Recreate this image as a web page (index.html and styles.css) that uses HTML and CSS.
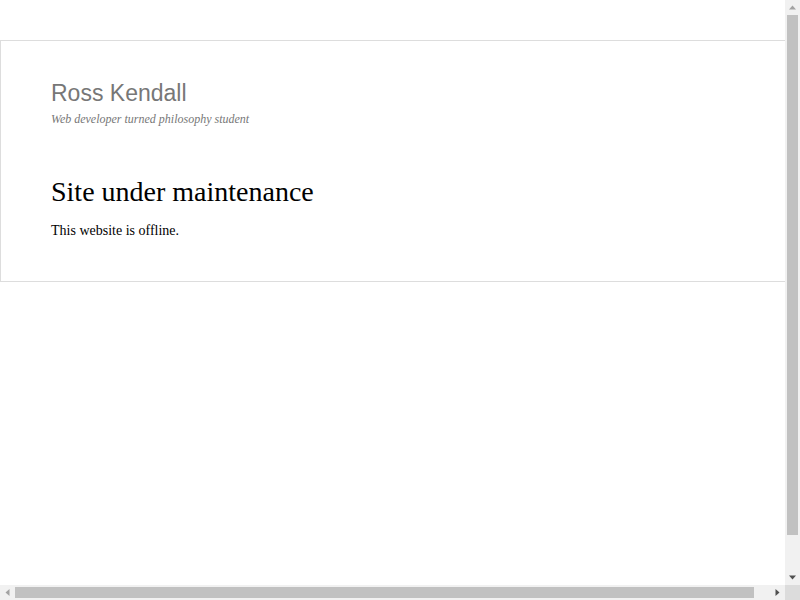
FILE: index.html
```html
<!DOCTYPE html>
<html lang="en">
<head>
<meta charset="utf-8">
<title>Ross Kendall</title>
<link rel="stylesheet" href="styles.css">
</head>
<body>
<div class="page">
  <div class="card">
    <header class="site-header">
      <h1 class="site-title">Ross Kendall</h1>
      <p class="site-tagline">Web developer turned philosophy student</p>
    </header>
    <main class="content">
      <h2 class="content-title">Site under maintenance</h2>
      <p class="content-text">This website is offline.</p>
    </main>
  </div>
</div>

<div class="scrollbar scrollbar-v" aria-hidden="true">
  <span class="sb-button"><svg width="15" height="15" viewBox="0 0 15 15"><path d="M4 9.5 L11 9.5 L7.5 5.5 Z" fill="#a3a3a3"/></svg></span>
  <span class="sb-track"><span class="sb-thumb"></span></span>
  <span class="sb-button"><svg width="15" height="15" viewBox="0 0 15 15"><path d="M4 5.5 L11 5.5 L7.5 9.5 Z" fill="#505050"/></svg></span>
</div>
<div class="scrollbar scrollbar-h" aria-hidden="true">
  <span class="sb-button"><svg width="15" height="15" viewBox="0 0 15 15"><path d="M9.5 4 L9.5 11 L5.5 7.5 Z" fill="#a3a3a3"/></svg></span>
  <span class="sb-track"><span class="sb-thumb"></span></span>
  <span class="sb-button"><svg width="15" height="15" viewBox="0 0 15 15"><path d="M5.5 4 L5.5 11 L9.5 7.5 Z" fill="#505050"/></svg></span>
</div>
<div class="scrollbar-corner" aria-hidden="true"></div>
</body>
</html>
```
FILE: styles.css
```css
html, body {
  margin: 0;
  padding: 0;
  background: #fff;
  overflow: hidden;
}

.page {
  padding-top: 40px;
}

.card {
  width: calc(100vw - 100px);
  border: 1px solid #ddd;
  padding: 38px 50px 40px;
  box-sizing: content-box;
  font-family: "Liberation Serif", serif;
  color: #000;
}

.site-title {
  margin: 0;
  font-family: "Liberation Sans", Arial, sans-serif;
  font-weight: normal;
  font-size: 23px;
  line-height: 28px;
  color: #777;
}

.site-tagline {
  margin: 4px 0 0;
  font-style: italic;
  font-size: 12px;
  line-height: 17px;
  color: #777;
}

.content {
  margin-top: 47px;
}

.content-title {
  margin: 0;
  font-weight: normal;
  font-size: 28px;
  line-height: 34px;
}

.content-text {
  margin: 12px 0 0;
  font-size: 14px;
  line-height: 20px;
}

/* scrollbars drawn over the page */
.scrollbar {
  position: fixed;
  display: flex;
  background: #f1f1f1;
}

.scrollbar-v {
  top: 0;
  right: 0;
  width: 15px;
  height: calc(100vh - 15px);
  flex-direction: column;
}

.scrollbar-h {
  left: 0;
  bottom: 0;
  height: 15px;
  width: calc(100vw - 15px);
  flex-direction: row;
}

.sb-button {
  flex: 0 0 15px;
  width: 15px;
  height: 15px;
  display: block;
}

.sb-button svg {
  display: block;
}

.sb-track {
  flex: 1;
  display: flex;
}

.scrollbar-v .sb-track {
  flex-direction: column;
}

.scrollbar-v .sb-thumb {
  display: block;
  margin: 0 2px;
  height: 520px;
  background: #c1c1c1;
}

.scrollbar-h .sb-thumb {
  display: block;
  margin: 2px 0;
  width: 739px;
  background: #c1c1c1;
}

.scrollbar-corner {
  position: fixed;
  right: 0;
  bottom: 0;
  width: 15px;
  height: 15px;
  background: #dcdcdc;
}
```
